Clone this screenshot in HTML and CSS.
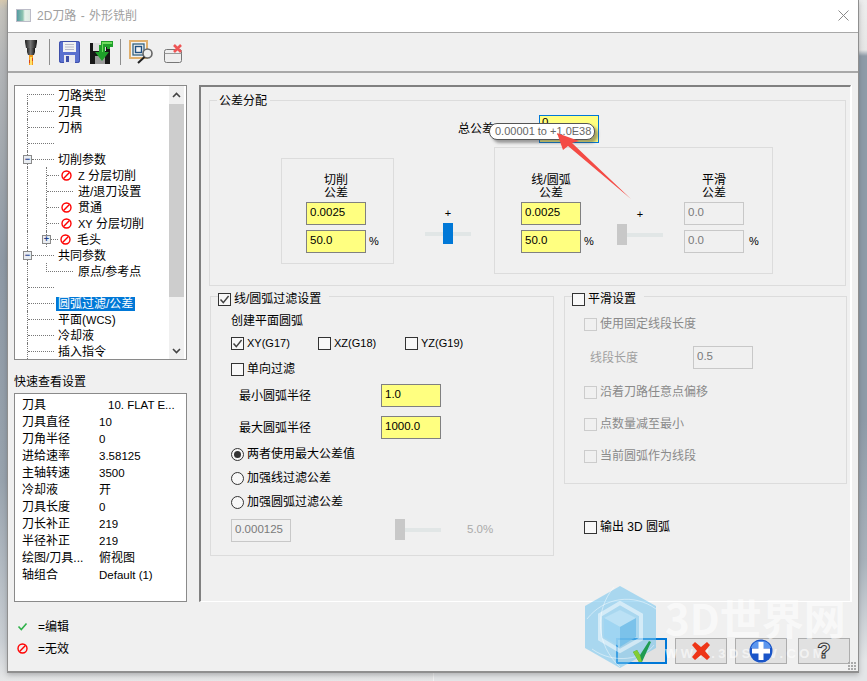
FILE: index.html
```html
<!DOCTYPE html>
<html lang="zh-CN">
<head>
<meta charset="utf-8">
<title>2D刀路 - 外形铣削</title>
<link rel="stylesheet" href="styles.css">
</head>
<body>
<svg class="defs" width="0" height="0" aria-hidden="true">
  <symbol id="no" viewBox="0 0 11 11"><circle cx="5.5" cy="5.5" r="4.5" fill="none" stroke="#f00" stroke-width="1.4"/><path d="M2.6 8.4 8.4 2.6" stroke="#f00" stroke-width="1.4"/></symbol>
  <symbol id="tick" viewBox="0 0 13 13"><path d="M2.5 6.5 5.3 9.6 10.6 3" fill="none" stroke="#444" stroke-width="1.5"/></symbol>
</svg>
<div class="window">
  <header class="titlebar">
    <svg class="title-icon" width="15" height="15" viewBox="0 0 15 15"><defs><linearGradient id="ti" x1="0" x2="1"><stop offset="0" stop-color="#4f97a0"/><stop offset=".45" stop-color="#8fc4b0"/><stop offset=".6" stop-color="#e6f2ea"/><stop offset="1" stop-color="#dce8e0"/></linearGradient></defs><rect x=".5" y="1.500" width="14" height="12" fill="url(#ti)" stroke="#bcbcc8"/></svg>
    <span class="title-text">2D刀路 - 外形铣削</span>
    <svg class="close" width="11" height="11" viewBox="0 0 11 11"><path d="M.5.5l10 10M10.5.5l-10 10" stroke="#8a8a8a" stroke-width="1"/></svg>
  </header>
  <nav class="toolbar">
    <svg class="tb-tool" width="12" height="26" viewBox="0 0 12 26"><defs><linearGradient id="tg" x1="0" x2="1"><stop offset="0" stop-color="#222"/><stop offset=".45" stop-color="#777"/><stop offset="1" stop-color="#111"/></linearGradient></defs><path d="M0 1h12v2l-1 6H1L0 3z" fill="url(#tg)"/><path d="M2 9h8v4l-1 3H3l-1-3z" fill="url(#tg)"/><path d="M4 16h4v10H4z" fill="#f29a1c"/><path d="M5 18h2v8H5z" fill="#ffe06a"/><path d="M4 21h1v3H4zM7 19h1v3H7z" fill="#d9431a"/></svg>
    <i class="tb-sep first"></i>
    <svg class="tb-save" width="21" height="22" viewBox="0 0 21 22"><rect width="21" height="22" rx="2" fill="#5a70cf"/><rect x=".5" y=".5" width="20" height="21" rx="2" fill="none" stroke="#3e4fa8"/><rect x="4" y="1" width="13" height="10" fill="#f2f2f2"/><path d="M6 3.5h9M6 6h9M6 8.500h9" stroke="#b8b8c8"/><rect x="5" y="14" width="11" height="8" fill="#e8e8f0"/><rect x="7" y="15" width="3" height="6" fill="#3e4fa8"/></svg>
    <svg class="tb-saveas" width="23" height="24" viewBox="0 0 23 24"><rect y="3" width="20" height="21" fill="#171717"/><rect x="3" y="3" width="13" height="8" fill="#ddd"/><rect x="5" y="16" width="10" height="8" fill="#9a9a9a"/><path d="M11 1h12v6h-3v2h-3V7h-2v5h4l-7 9-7-9h4V5h2z" fill="#1fa02a"/><path d="M12 2h10v2H13v8h-1z" fill="#6fdc5f"/></svg>
    <i class="tb-sep"></i>
    <svg class="tb-view" width="25" height="24" viewBox="0 0 25 24"><rect x="1" y="1" width="17" height="17" fill="#f3f3f3" stroke="#e0b06e" stroke-width="2"/><rect x="4" y="4" width="11" height="11" fill="none" stroke="#33627f" stroke-width="1.300"/><rect x="6.500" y="6.500" width="6" height="6" fill="none" stroke="#1f4f80" stroke-width="1.400"/><circle cx="18.500" cy="13.500" r="4.500" fill="#eee" stroke="#666" stroke-width="1.600"/><path d="M15.500 17 9 23" stroke="#222" stroke-width="2"/></svg>
    <svg class="tb-del" width="19" height="19" viewBox="0 0 19 19"><rect x=".5" y="5.500" width="17" height="13" rx="2" fill="#eee" stroke="#777"/><path d="M.5 9.500h17" stroke="#999"/><path d="M10 1l7 7M17 1l-7 7" stroke="#ee5555" stroke-width="2.600"/></svg>
  </nav>
  <div class="content">
    <aside class="side">
      <div class="tree">
        <div class="tree-rows">
          <div class="row"><i class="elbow-top"></i><span class="lbl">刀路类型</span></div>
          <div class="row"><div class="trunk"><i class="h h27"></i><span class="lbl">刀具</span></div></div>
          <div class="row"><div class="trunk"><i class="h h27"></i><span class="lbl">刀柄</span></div></div>
          <div class="row"><div class="trunk"><i class="h h27"></i></div></div>
          <div class="row"><div class="trunk"><i class="box">−</i><i class="h h22"></i><span class="lbl">切削参数</span></div></div>
          <div class="row"><div class="trunk"><div class="branch"><i class="h h12"></i><svg class="no"><use href="#no"/></svg><span class="lbl sub"><span class="lat">Z</span> 分层切削</span></div></div></div>
          <div class="row"><div class="trunk"><div class="branch"><i class="h h26"></i><span class="lbl sub2">进/退刀设置</span></div></div></div>
          <div class="row"><div class="trunk"><div class="branch"><i class="h h12"></i><svg class="no"><use href="#no"/></svg><span class="lbl sub">贯通</span></div></div></div>
          <div class="row"><div class="trunk"><div class="branch"><i class="h h12"></i><svg class="no"><use href="#no"/></svg><span class="lbl sub"><span class="lat">XY</span> 分层切削</span></div></div></div>
          <div class="row"><div class="trunk"><div class="branch end"><i class="box">+</i><i class="h h7"></i><svg class="no"><use href="#no"/></svg><span class="lbl sub">毛头</span></div></div></div>
          <div class="row"><div class="trunk"><i class="box">−</i><i class="h h22"></i><span class="lbl">共同参数</span></div></div>
          <div class="row"><div class="trunk"><i class="elbow"></i><span class="lbl sub2">原点/参考点</span></div></div>
          <div class="row"><div class="trunk"><i class="h h27"></i></div></div>
          <div class="row"><div class="trunk"><i class="h h27"></i><span class="lbl selected">圆弧过滤/公差</span></div></div>
          <div class="row"><div class="trunk"><i class="h h27"></i><span class="lbl">平面(<span class="lat">WCS</span>)</span></div></div>
          <div class="row"><div class="trunk"><i class="h h27"></i><span class="lbl">冷却液</span></div></div>
          <div class="row"><div class="trunk"><i class="h h27"></i><span class="lbl">插入指令</span></div></div>
        </div>
        <div class="scrollbar">
          <span class="sb-btn"><svg width="9" height="6" viewBox="0 0 9 6"><path d="M1 5l3.500-3.500L8 5" fill="none" stroke="#444" stroke-width="1.600"/></svg></span>
          <span class="sb-thumb"></span>
          <span class="sb-btn low"><svg width="9" height="6" viewBox="0 0 9 6"><path d="M1 1l3.500 3.500L8 1" fill="none" stroke="#444" stroke-width="1.600"/></svg></span>
        </div>
      </div>
      <h2 class="side-head">快速查看设置</h2>
      <dl class="quick">
        <dt>刀具</dt><dd class="shift lat-v">10. FLAT E...</dd>
        <dt>刀具直径</dt><dd class="lat-v">10</dd>
        <dt>刀角半径</dt><dd class="lat-v">0</dd>
        <dt>进给速率</dt><dd class="lat-v">3.58125</dd>
        <dt>主轴转速</dt><dd class="lat-v">3500</dd>
        <dt>冷却液</dt><dd>开</dd>
        <dt>刀具长度</dt><dd class="lat-v">0</dd>
        <dt>刀长补正</dt><dd class="lat-v">219</dd>
        <dt>半径补正</dt><dd class="lat-v">219</dd>
        <dt>绘图/刀具...</dt><dd>俯视图</dd>
        <dt>轴组合</dt><dd class="lat-v">Default (1)</dd>
      </dl>
      <div class="key first"><svg width="10" height="9" viewBox="0 0 10 9"><path d="M1 4.500 3.800 7.500 9 1.500" fill="none" stroke="#2fb24a" stroke-width="1.600"/></svg><span>=编辑</span></div>
      <div class="key"><svg width="11" height="11"><use href="#no"/></svg><span>=无效</span></div>
    </aside>
    <main class="main">
      <section class="panel">
        <div class="group alloc">
          <div class="legend"><span>公差分配</span></div>
          <div class="total"><span class="total-lbl">总公差</span><input class="field total-in" value="0"></div>
          <div class="tol-row">
            <div class="tol-box one">
              <div class="tol-col">
                <div class="tol-head">切削<br>公差</div>
                <div class="tol-f"><input class="field" value="0.0025"></div>
                <div class="tol-f"><input class="field" value="50.0"><span class="pct">%</span></div>
              </div>
            </div>
            <div class="slider lone">
              <span class="plus">+</span>
              <div class="track"><i class="thumb mid"></i></div>
            </div>
            <div class="tol-box two">
              <div class="tol-col">
                <div class="tol-head">线/圆弧<br>公差</div>
                <div class="tol-f"><input class="field" value="0.0025"></div>
                <div class="tol-f"><input class="field" value="50.0"><span class="pct">%</span></div>
              </div>
              <div class="slider">
                <span class="plus">+</span>
                <div class="track"><i class="thumb off"></i></div>
              </div>
              <div class="tol-col">
                <div class="tol-head">平滑<br>公差</div>
                <div class="tol-f"><input class="field dis" value="0.0" disabled></div>
                <div class="tol-f"><input class="field dis" value="0.0" disabled><span class="pct wide">%</span></div>
              </div>
            </div>
          </div>
        </div>
        <div class="lower">
          <div class="group filter">
            <div class="legend chk"><span class="cb"><svg><use href="#tick"/></svg></span><span>线/圆弧过滤设置</span></div>
            <div class="f-body">
              <div class="line m6">创建平面圆弧</div>
              <div class="line m6 planes">
                <label class="opt p1"><span class="cb"><svg><use href="#tick"/></svg></span><span class="lat">XY(G17)</span></label>
                <label class="opt p1"><span class="cb"></span><span class="lat">XZ(G18)</span></label>
                <label class="opt"><span class="cb"></span><span class="lat">YZ(G19)</span></label>
              </div>
              <label class="line opt m10"><span class="cb"></span><span>单向过滤</span></label>
              <div class="inrow m7"><span class="in-lbl">最小圆弧半径</span><input class="field" value="1.0"></div>
              <div class="inrow m9"><span class="in-lbl">最大圆弧半径</span><input class="field" value="1000.0"></div>
              <label class="line opt m7"><span class="rd on"></span><span>两者使用最大公差值</span></label>
              <label class="line opt m8"><span class="rd"></span><span>加强线过滤公差</span></label>
              <label class="line opt m8"><span class="rd"></span><span>加强圆弧过滤公差</span></label>
              <div class="weak-row">
                <input class="field dis" value="0.000125" disabled>
                <div class="track lonely"><i class="thumb off"></i></div>
                <span class="pct-txt">5.0%</span>
              </div>
            </div>
          </div>
          <div class="right-col">
            <div class="group smooth">
              <div class="legend chk"><span class="cb"></span><span>平滑设置</span></div>
              <div class="s-body">
                <label class="line opt off m9"><span class="cb"></span><span>使用固定线段长度</span></label>
                <div class="inrow m14 off"><span class="seg-lbl">线段长度</span><input class="field dis" value="0.5" disabled></div>
                <label class="line opt off m15"><span class="cb"></span><span>沿着刀路任意点偏移</span></label>
                <label class="line opt off m16"><span class="cb"></span><span>点数量减至最小</span></label>
                <label class="line opt off m16"><span class="cb"></span><span>当前圆弧作为线段</span></label>
              </div>
            </div>
            <label class="line opt out3d"><span class="cb"></span><span>输出 3D 圆弧</span></label>
          </div>
        </div>
      </section>
      <div class="actions">
        <button class="btn default" aria-label="确定"><svg width="18" height="21" viewBox="0 0 18 21"><path d="M0 11l4-2 3 5L16 0l2 1L9 21H6z" fill="#1f9c52"/><path d="M0 11l4-2 3 5 2 7H6z" fill="#84cc35"/></svg></button>
        <button class="btn" aria-label="取消"><svg width="18" height="18" viewBox="0 0 18 18"><path d="M3 0l6 5 6-5 3 3-5 6 5 6-3 3-6-5-6 5-3-3 5-6-5-6z" fill="#ee3517"/></svg></button>
        <button class="btn" aria-label="添加"><svg width="24" height="24" viewBox="0 0 24 24"><circle cx="12" cy="12" r="11.500" fill="#1a55c8"/><path d="M2 9a10.500 10.500 0 0 1 20 0z" fill="#5c97ef"/><path d="M9.500 3h5v6.500H21v5h-6.500V21h-5v-6.500H3v-5h6.500z" fill="#fff"/></svg></button>
        <button class="btn" aria-label="帮助"><span class="q">?</span></button>
      </div>
    </main>
  </div>
  <div class="tooltip">0.00001 to +1.0E38</div>
  <svg class="arrow" width="76" height="68" viewBox="0 0 76 68"><path d="M1 1 23 9 16 11 75 67 12 14 7 18z" fill="#f44b45"/></svg>
  <div class="watermark">
    <svg width="74" height="84" viewBox="0 0 74 84"><path d="M36 1 72 21V63L36 83 1 63V21z" fill="#6fc2ee" opacity=".55"/><path d="M36 18 57 30V54L36 66 16 54V30z" fill="none" stroke="#fff" stroke-width="4" opacity=".5"/><path d="M20 33 36 25 52 33 36 42z" fill="#bfe3f6" opacity=".8"/><path d="M20 33 36 42V62L20 52z" fill="#9cd4f2" opacity=".8"/><path d="M52 33 36 42V62L52 52z" fill="#6fbde9" opacity=".8"/><path d="M30 2C10 26 12 60 36 82M72 24C50 8 20 12 3 34M70 60C60 74 30 80 8 64" fill="none" stroke="#fff" stroke-width="1" opacity=".45"/></svg>
    <div class="wm-text"><strong>3D世界网</strong><span>WWW.3DSJW.COM</span></div>
  </div>
  <i class="grip"></i>
</div>
</body>
</html>
```
FILE: styles.css
```css
* { box-sizing: border-box; }
html, body { height: 100%; }
body {
  margin: 0;
  overflow: hidden;
  font: 12px/16px "Liberation Sans", "Noto Sans CJK SC", sans-serif;
  color: #000;
  background:
    linear-gradient(#d6c8ae 0, #c4c2bc 10px, #b4b6b8 60px, #8e99a5 260px, #98a3ae 480px, #c9ced3 640px, #e6e7e8 681px) left/50% 100% no-repeat,
    linear-gradient(#ededed 0, #e6e6e6 50px, #8f9ba8 56px, #8f9ba8 420px, #a9b2bb 560px, #e3e5e7 660px) right/50% 100% no-repeat;
}
.defs { position: absolute; }
i { display: block; font-style: normal; }
.lat { font-size: 11px; }

.window {
  position: relative;
  width: 852px;
  height: 673px;
  margin-left: 7px;
  background: #f0f0f0;
  border: solid #8f8f8f;
  border-width: 0 1px 2px 1px;
  box-shadow: 0 2px 5px rgba(60, 60, 60, .3);
  overflow: hidden;
}
.titlebar {
  display: flex;
  align-items: center;
  height: 32px;
  padding: 0 9px 1px 8px;
  background: #fff;
}
.title-text { margin-left: 6px; color: #a0a0a0; font-size: 12px; word-spacing: 1px; }
.close { margin-left: auto; }
.title-icon { flex: none; }

.toolbar {
  display: flex;
  align-items: center;
  height: 41px;
  padding: 0 0 0 17px;
  border-top: 1px solid #a8a8a8;
  border-bottom: 2px solid #a8a8a8;
}
.tb-sep { width: 1px; height: 26px; background: #8e8e8e; }
.tb-sep.first { margin-left: 12px; }
.tb-save { margin-left: 9px; }
.tb-saveas { margin-left: 10px; }
.toolbar .tb-sep:nth-of-type(2) { margin-left: 7px; }
.tb-view { margin-left: 8px; }
.tb-del { margin-left: 10px; margin-top: 2px; }

.content { display: flex; padding: 12px 7px 0 6px; column-gap: 12px; }
.side { width: 173px; flex: none; }
.main { width: 652px; flex: none; }

/* tree */
.tree {
  display: flex;
  height: 275px;
  background: #fff;
  border: 1px solid #8a8a8a;
  overflow: hidden;
}
.tree-rows { width: 154px; flex: none; padding-top: 1px; }
.row { display: flex; align-items: center; height: 16px; padding-left: 12px; }
.trunk { display: flex; align-items: center; align-self: stretch; flex: 1; border-left: 1px dotted #777; }
.branch { display: flex; align-items: center; align-self: stretch; margin-left: 18px; border-left: 1px dotted #777; }
.branch.end { background: linear-gradient(#fff, #fff); }
.h { height: 0; border-top: 1px dotted #777; flex: none; }
.h27 { width: 26px; }
.h26 { width: 26px; }
.h22 { width: 22px; }
.h12 { width: 12px; }
.h7 { width: 7px; }
.elbow-top { align-self: flex-end; width: 27px; height: 9px; border-left: 1px dotted #777; border-top: 1px dotted #777; flex: none; }
.elbow { align-self: flex-start; width: 27px; height: 9px; margin-left: 18px; border-left: 1px dotted #777; border-bottom: 1px dotted #777; flex: none; }
.box {
  flex: none;
  width: 9px; height: 9px;
  margin-left: -5px;
  border: 1px solid #8a8a8a;
  background: #e9edf2;
  color: #22408c;
  font: bold 9px/7px "Liberation Sans", sans-serif;
  text-align: center;
}
.lbl { margin-left: 4px; padding-top: 2px; white-space: nowrap; line-height: 16px; }
.no { width: 11px; height: 11px; margin-left: 2px; flex: none; }
.lbl.sub { margin-left: 6px; }
.lbl.sub2 { margin-left: 5px; }
.elbow + .lbl.sub2 { margin-left: 5px; }
.lbl.selected { margin: 2px 0 0 2px; padding: 0 2px; background: #0078d7; color: #fff; line-height: 14px; }
.scrollbar { display: flex; flex-direction: column; width: 15px; margin-left: 0; background: #f0f0f0; }
.sb-btn { display: flex; align-items: center; justify-content: center; height: 18px; flex: none; }
.sb-btn.low { margin-top: auto; height: 17px; }
.sb-thumb { height: 193px; background: #cdcdcd; }

.side-head { margin: 14px 0 3px; font: inherit; }
.quick {
  display: grid;
  grid-template-columns: 77px 1fr;
  grid-auto-rows: 17px;
  align-items: center;
  height: 209px;
  margin: 0;
  padding: 3px 0 0 7px;
  background: #fff;
  border: 1px solid #8a8a8a;
}
.quick dt, .quick dd { margin: 0; white-space: nowrap; overflow: hidden; line-height: 17px; }
.lat-v { font-size: 11.5px; }
.quick .shift { padding-left: 9px; }
.key { display: flex; align-items: center; height: 16px; margin-top: 6px; padding-left: 3px; }
.key.first { margin-top: 16px; }
.key svg { flex: none; width: 11px; }
.key span { margin-left: 10px; padding-top: 2px; }

/* panel */
.panel {
  height: 517px;
  padding: 13px 0 0 8px;
  border: solid #808080;
  border-width: 2px 0 0 2px;
  border-right: 1px solid #fff;
  border-bottom: 1px solid #fff;
  box-shadow: 1px 0 0 #fff;
}
.group { border: 1px solid #dcdcdc; }
.legend { display: flex; align-items: center; height: 16px; margin: -8px 0 0 7px; width: max-content; padding: 0 3px 0 2px; background: #f0f0f0; }
.legend.chk { margin: -6px 0 0 7px; padding: 0 8px 0 0; }
.legend .cb { margin-right: 3px; }
.alloc { width: 637px; height: 186px; }
.total { display: flex; align-items: center; height: 28px; margin: 6px 0 0 248px; }
.total-lbl { width: 81px; }
.field {
  width: 60px;
  height: 23px;
  flex: none;
  padding: 0 0 3px 3px;
  border: 1px solid #808080;
  border-radius: 0;
  outline: 0;
  background: #ffff80;
  color: #000;
  font: 11.5px "Liberation Sans", sans-serif;
}
.field.dis { background: #f0f0f0; border-color: #c8c8c8; color: #7a7a7a; opacity: 1; }
.total-in { height: 28px; padding: 0 0 15px 2px; border-color: #0078d7; }

.tol-row { display: flex; align-items: center; margin: 4px 0 0 71px; }
.tol-box { border: 1px solid #dcdcdc; }
.tol-box.one { width: 113px; height: 106px; padding: 15px 0 0 24px; }
.tol-box.two { display: flex; align-items: flex-start; width: 279px; height: 127px; margin-left: 23px; padding: 26px 0 0 26px; }
.tol-col { width: 80px; flex: none; }
.tol-head { width: 60px; margin-bottom: 2px; line-height: 13px; text-align: center; white-space: nowrap; }
.tol-f { display: flex; height: 23px; margin-bottom: 5px; }
.pct { margin-left: 3px; font-size: 11px; line-height: 22px; }
.pct.wide { margin-left: 5px; }
.slider { display: flex; flex-direction: column; align-items: center; width: 46px; margin: 32px 0 0 16px; flex: none; }
.slider + .tol-col { margin-left: 21px; }
.slider.lone { margin: 28px 0 0 31px; }
.plus { display: block; height: 14px; margin-bottom: 4px; font: 11px/16px "Liberation Sans", sans-serif; }
.track {
  width: 46px;
  height: 21px;
  flex: none;
  background: linear-gradient(#e1e6e6, #e1e6e6) center/100% 4px no-repeat;
  box-shadow: none;
}
.thumb { width: 10px; height: 21px; }
.thumb.mid { margin-left: 18px; background: #0078d7; }
.thumb.off { background: #c8c8c8; }

.lower { display: flex; align-items: flex-start; margin: 10px 0 0 1px; }
.filter { width: 344px; height: 260px; }
.f-body { padding-left: 20px; }
.line { display: flex; align-items: center; height: 16px; white-space: nowrap; }
.m6 { margin-top: 6px; } .m7 { margin-top: 7px; } .m8 { margin-top: 8px; } .m9 { margin-top: 9px; }
.m10 { margin-top: 10px; } .m14 { margin-top: 14px; } .m15 { margin-top: 15px; } .m16 { margin-top: 16px; }
.opt { display: flex; align-items: center; }
.planes .p1 { width: 87px; }
.cb {
  display: block;
  width: 13px; height: 13px;
  flex: none;
  margin-right: 3px;
  background: #f8f8f8;
  border: 1px solid #333;
}
.cb svg { display: block; width: 13px; height: 13px; margin: -1px; }
.rd {
  position: relative;
  display: block;
  width: 13px; height: 13px;
  flex: none;
  margin-right: 3px;
  background: #f8f8f8;
  border: 1px solid #333;
  border-radius: 50%;
}
.rd.on::after { content: ""; position: absolute; inset: 2px; background: #333; border-radius: 50%; }
.inrow { display: flex; align-items: center; }
.in-lbl { width: 142px; margin-left: 8px; }
.weak-row { display: flex; align-items: flex-start; margin-top: 9px; }
.track.lonely { margin-left: 104px; }
.pct-txt { margin-left: 26px; color: #aaa; font-size: 11.5px; line-height: 21px; }

.right-col { margin-left: 10px; }
.smooth { width: 283px; height: 188px; }
.s-body { padding-left: 19px; }
.off { color: #8a8a8a; }
.off .cb { border-color: #ccc; background: #f0f0f0; }
.seg-lbl { width: 103px; margin-left: 6px; color: #a0a0a0; }
.out3d { margin: 35px 0 0 20px; }

.actions { display: flex; justify-content: flex-end; gap: 8px; margin-top: 36px; padding-right: 1px; }
.btn {
  display: flex;
  align-items: center;
  justify-content: center;
  width: 52px;
  height: 26px;
  padding: 0;
  background: #e1e1e1;
  border: 1px solid #adadad;
}
.btn > svg, .btn > span { position: relative; z-index: 2; }
.btn.default { width: 51px; border: 2px solid #0078d7; }
.btn:last-child { margin-left: 3px; }
.q { font: bold 22px/24px "Liberation Sans", sans-serif; color: #e8e8e8; -webkit-text-stroke: 1px #333; }

/* overlays */
.tooltip {
  position: absolute;
  left: 481px; top: 123px;
  width: 106px; height: 17px;
  padding-left: 5px;
  background: #fff;
  border: 1px solid #555;
  border-radius: 8px;
  box-shadow: 3px 3px 3px rgba(70, 70, 70, .5);
  color: #666;
  font: 11px/15px "Liberation Sans", sans-serif;
  white-space: nowrap;
}
.arrow { position: absolute; left: 548px; top: 132px; }
.watermark { position: absolute; left: 576px; top: 585px; display: flex; pointer-events: none; }
.wm-text { display: flex; flex-direction: column; margin-left: 7px; color: rgba(255, 255, 255, .6); }
.wm-text strong { font: bold 42px/52px "Noto Sans CJK SC", sans-serif; white-space: nowrap; margin-top: 6px; }
.wm-text span { font: bold 13px/16px "Liberation Sans", sans-serif; letter-spacing: 3.4px; margin-top: 3px; }
.grip {
  position: absolute;
  right: 1px; bottom: 0;
  width: 9px; height: 9px;
  background: radial-gradient(circle at 1px 1px, #aaa 1.200px, transparent 1.300px) 0 0/3px 3px;
}
```
